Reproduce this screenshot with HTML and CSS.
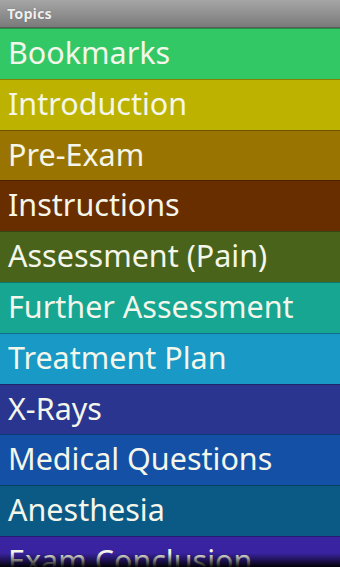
FILE: index.html
```html
<!DOCTYPE html>
<html>
<head>
<meta charset="utf-8">
<link rel="stylesheet" href="styles.css">
</head>
<body>
<div class="screen">
  <div class="titlebar">Topics</div>
  <ul class="list">
    <li class="row c1">Bookmarks</li>
    <li class="row c2">Introduction</li>
    <li class="row c3">Pre-Exam</li>
    <li class="row c4">Instructions</li>
    <li class="row c5">Assessment (Pain)</li>
    <li class="row c6">Further Assessment</li>
    <li class="row c7">Treatment Plan</li>
    <li class="row c8">X-Rays</li>
    <li class="row c9">Medical Questions</li>
    <li class="row c10">Anesthesia</li>
    <li class="row c11">Exam Conclusion</li>
  </ul>
  <div class="fade"></div>
</div>
</body>
</html>
```
FILE: styles.css
```css
html, body {
  margin: 0;
  padding: 0;
  background: #000;
}
.screen {
  width: 340px;
  height: 567px;
  overflow: hidden;
  position: relative;
  font-family: "Noto Sans", sans-serif;
}
.titlebar {
  height: 28px;
  box-sizing: border-box;
  padding: 5px 0 0 7px;
  background: linear-gradient(#a6a6a6, #7a7a7a);
  border-bottom: 1px solid #5a5a5a;
  color: #f0f0f0;
  font-family: "Noto Sans", sans-serif;
  font-weight: bold;
  font-size: 14.5px;
  line-height: 16px;
  text-shadow: 0 0 1px rgba(0,0,0,0.45);
}
.list {
  list-style: none;
  margin: 0;
  padding: 0;
}
.row {
  height: 50.8px;
  box-sizing: border-box;
  border-top: 1px solid rgba(0,0,0,0.28);
  padding-left: 8px;
  color: #f4f6ea;
  font-family: "Noto Sans", sans-serif;
  font-size: 30.5px;
  line-height: 46px;
  white-space: nowrap;
}
.c1 { background: #33c866; }
.c2 { background: #bdb200; }
.c3 { background: #9a7400; }
.c4 { background: #682e00; }
.c5 { background: #4a631a; }
.c6 { background: #16a692; }
.c7 { background: #1899c6; }
.c8 { background: #2a3590; }
.c9 { background: #1450a6; }
.c10 { background: #0b5a86; }
.c11 { background: #3a23a0; }
.fade {
  position: absolute;
  left: 0;
  right: 0;
  bottom: 0;
  height: 14px;
  background: linear-gradient(rgba(0,0,0,0), rgba(0,0,0,0.95));
}
```
